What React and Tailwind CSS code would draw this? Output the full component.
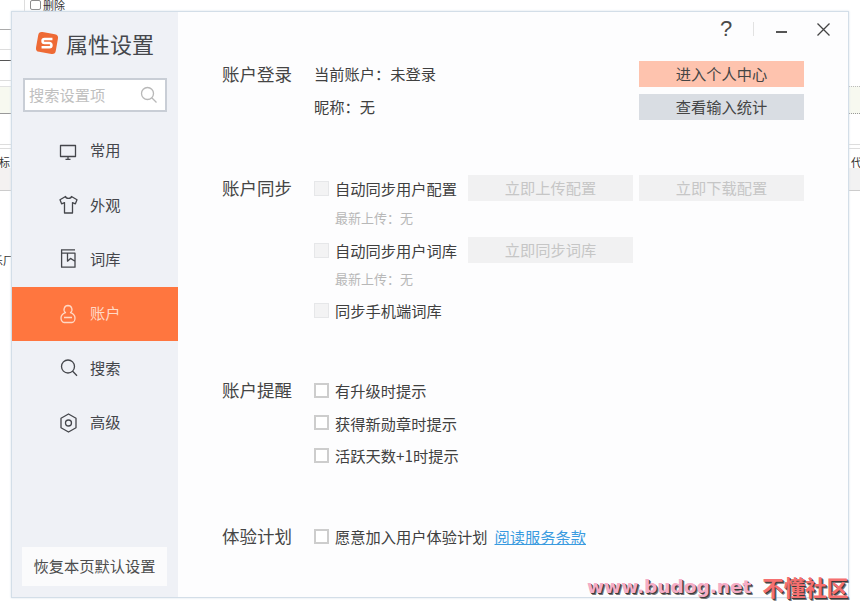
import React from 'react';

const navItems = [
  { label: '常用', icon: 'monitor' },
  { label: '外观', icon: 'shirt' },
  { label: '词库', icon: 'book' },
  { label: '账户', icon: 'user', active: true },
  { label: '搜索', icon: 'search' },
  { label: '高级', icon: 'gear' },
];

const NavIcon = ({ name }) => (
  <svg width="20" height="20" viewBox="0 0 20 20" fill="none" stroke="currentColor" strokeWidth="1.3" strokeLinejoin="round">
    {name === 'monitor' && <path d="M1.500 4.500h15v11h-15zM6.500 18.300h5M9 15.500v2.800" />}
    {name === 'shirt' && <path d="M6.500 1.500 1 4.800l1.600 4 2.900-1.200V18h8V7.600l2.900 1.200 1.600-4L12.500 1.500c-.5 2.500-5.500 2.500-6 0z" />}
    {name === 'book' && <path d="M2 .8h14M2.600.8V18.200H16V4.200H2.600M8.500 4.200v8l3-2.800 4.500 2.800" />}
    {name === 'user' && <path d="M9 1.500a4 4 0 0 1 2.500 7.100c2.800 1 4.500 3 4.500 5.400 0 2.500-1.500 4.500-3 4.500H5c-1.500 0-3-2-3-4.500 0-2.400 1.700-4.400 4.500-5.400A4 4 0 0 1 9 1.500zM5 13.500h8" />}
    {name === 'search' && <path d="M9 2a6.500 6.500 0 1 0 0 13 6.500 6.500 0 0 0 0-13zM13.700 13.200 18 17.800" />}
    {name === 'gear' && (
      <>
        <path d="M9.500 1 17 5.300v9.400L9.500 19 2 14.700V5.300z" />
        <circle cx="9.500" cy="10" r="3" />
      </>
    )}
  </svg>
);

const Checkbox = ({ disabled }) => (
  <span className={`block w-[15px] h-[15px] shrink-0 ${disabled ? 'border border-[#e6e7e9] bg-[#f3f3f4]' : 'border-2 border-[#cdcdcd] bg-white'}`} />
);

const CheckRow = ({ label, disabled, children, className = '' }) => (
  <div className={`flex items-center ${className}`}>
    <Checkbox disabled={disabled} />
    <span className="ml-[6px] text-[15.250px] leading-[26px] text-[#404040] whitespace-nowrap">{label}</span>
    {children}
  </div>
);

const GreyButton = ({ children }) => (
  <button type="button" className="w-[165px] h-[26px] shrink-0 pb-[2px] bg-[#f1f1f2] text-[15.250px] text-[#c6c6c6]">
    {children}
  </button>
);

const SectionLabel = ({ children }) => (
  <div className="w-[92px] shrink-0 text-[17.500px] leading-[26px] text-[#454545] whitespace-nowrap">{children}</div>
);

export default function App() {
  return (
    <div className="relative w-[860px] h-[609px] overflow-hidden bg-white [font-family:'Noto_Sans_CJK_SC','Noto_Sans',sans-serif]">
      {/* the page behind the dialog */}
      <div className="absolute left-[22px] top-0 w-[3px] h-[11px] border-r border-[#ddd]" />
      <div className="absolute left-[30px] top-0 w-[11px] h-[10px] border border-[#8c8c8c] rounded-[2px]" />
      <span className="absolute left-[43px] top-[-2px] text-[11px] leading-[14px] text-[#333]">删除</span>
      <div className="absolute left-0 top-[29px] w-[12px] h-px bg-[#aaa]" />
      <div className="absolute left-0 top-[49px] w-[12px] h-px bg-[#ddd]" />
      <div className="absolute left-0 top-[60px] w-[12px] h-px bg-[#555]" />
      <div className="absolute left-0 top-[80px] w-[12px] h-px bg-[#ddd]" />
      <div className="absolute left-0 top-[86px] w-[12px] h-[28px] bg-[#f7f9f0] border-t border-[#e2e2e2] border-b border-b-[#999]" />
      <div className="absolute left-0 top-[144px] w-[12px] h-px bg-[#ddd]" />
      <div className="absolute left-0 top-[148px] w-[12px] h-px bg-[#ddd]" />
      <div className="absolute left-0 top-[168px] w-[12px] h-[23px] bg-[#f4f1f1] border-b border-[#ccc]" />
      <span className="absolute left-[-1px] top-[155px] text-[11px] leading-[14px] text-[#333]">标</span>
      <span className="absolute left-[-8px] top-[253px] text-[11px] leading-[14px] text-[#333]">乐厂</span>
      <div className="absolute left-[849px] top-[86px] w-[11px] h-[28px] bg-[#f7f9f0] border-t border-dotted border-[#bbb] border-b border-b-[#999] border-b-solid" />
      <div className="absolute left-[849px] top-[144px] w-[11px] h-px bg-[#ddd]" />
      <div className="absolute left-[849px] top-[148px] w-[11px] h-px bg-[#ddd]" />
      <div className="absolute left-[849px] top-[168px] w-[11px] h-[23px] bg-[#f2f2f2] border-b border-[#ccc]" />
      <span className="absolute left-[851px] top-[155px] text-[11px] leading-[14px] text-[#333]">代</span>

      {/* dialog */}
      <div className="absolute left-[11px] top-[11px] w-[838px] h-[587px] flex bg-[#fdfdfe] border border-[#d3dee8] shadow-[0_0_2px_#d5e0ea]">
        <aside className="w-[166px] shrink-0 flex flex-col bg-[#eff1f6]">
          <div className="flex items-center h-[24px] mt-[19px] ml-[23px]">
            <svg width="24" height="24" viewBox="0 0 22 22">
              <rect x="1.800" y="1.800" width="18.400" height="18.400" rx="3.500" transform="rotate(10 11 11)" fill="#ee6a35" />
              <path d="M16 7.300H8.800a1.900 1.900 0 0 0 0 3.800h4.400a1.900 1.900 0 0 1 0 3.800H6" fill="none" stroke="#fff" strokeWidth="2.300" />
            </svg>
            <span className="ml-[7px] text-[22px] leading-[24px] text-[#45474c] whitespace-nowrap">属性设置</span>
          </div>
          <div className="flex items-center justify-between w-[144px] h-[34px] mt-[23px] ml-[11px] pl-[4px] pr-[7px] bg-white border-2 border-[#c9ced6]">
            <span className="pb-[2px] text-[15.250px] text-[#c0c0c0] whitespace-nowrap">搜索设置项</span>
            <svg width="18" height="18" viewBox="0 0 18 18" fill="none" stroke="#b8b8b8" strokeWidth="1.300">
              <path d="M7.500 1.500a6 6 0 1 0 0 12 6 6 0 0 0 0-12zM12 12l4.500 4.500" />
            </svg>
          </div>
          <nav className="flex flex-col mt-[11.500px]">
            {navItems.map((item) => (
              <div
                key={item.label}
                className={`flex items-center h-[54.400px] pl-[47px] ${item.active ? 'bg-[#ff763f] text-[#ffd9c6]' : 'text-[#44464b]'}`}
              >
                <NavIcon name={item.icon} />
                <span className="ml-[11px] pb-[2px] text-[15.250px]">{item.label}</span>
              </div>
            ))}
          </nav>
          <button type="button" className="mt-auto mb-[11px] ml-[10px] w-[145px] h-[39px] pb-[2px] bg-[#fbfbfc] text-[15.250px] text-[#4d4d4d] whitespace-nowrap">
            恢复本页默认设置
          </button>
        </aside>

        <main className="relative flex-1 flex flex-col pl-[44px]">
          <div className="absolute left-[542px] top-[3px] flex items-center text-[#4a4a4a]">
            <span className="text-[22px] leading-[28px] [font-family:'Liberation_Sans',sans-serif]">?</span>
            <span className="w-px h-[14px] ml-[21px] bg-[#e2e2e2]" />
            <span className="w-[11px] h-[2px] mt-[6px] ml-[22px] bg-[#555]" />
            <svg className="ml-[30px]" width="13" height="13" viewBox="0 0 13 13" fill="none" stroke="#444" strokeWidth="1.300">
              <path d="M.5.500l12 12M12.500.500l-12 12" />
            </svg>
          </div>

          <section className="flex mt-[49px]">
            <SectionLabel>账户登录</SectionLabel>
            <div className="flex-1 flex flex-col">
              <div className="flex justify-between h-[26px] mb-[7px] pr-[44px] items-center">
                <span className="pb-[2px] text-[15.250px] text-[#404040]">当前账户：未登录</span>
                <button type="button" className="w-[165px] h-[26px] pb-[2px] bg-[#fec3ae] text-[15.250px] text-[#454545]">进入个人中心</button>
              </div>
              <div className="flex justify-between h-[26px] pr-[44px] items-center">
                <span className="pb-[2px] text-[15.250px] text-[#404040]">昵称：无</span>
                <button type="button" className="w-[165px] h-[26px] pb-[2px] bg-[#d9dde3] text-[15.250px] text-[#454545]">查看输入统计</button>
              </div>
            </div>
          </section>

          <section className="flex mt-[55px]">
            <SectionLabel>账户同步</SectionLabel>
            <div className="flex-1 flex flex-col">
              <CheckRow label="自动同步用户配置" disabled>
                <div className="flex gap-[6px] ml-[11px]">
                  <GreyButton>立即上传配置</GreyButton>
                  <GreyButton>立即下载配置</GreyButton>
                </div>
              </CheckRow>
              <div className="ml-[21px] mt-[4px] h-[26px] text-[13px] leading-[26px] text-[#b8b8b8]">最新上传：无</div>
              <CheckRow label="自动同步用户词库" disabled className="mt-[6px]">
                <div className="ml-[11px]">
                  <GreyButton>立即同步词库</GreyButton>
                </div>
              </CheckRow>
              <div className="ml-[21px] mt-[3px] h-[26px] text-[13px] leading-[26px] text-[#b8b8b8]">最新上传：无</div>
              <CheckRow label="同步手机端词库" disabled className="mt-[5px]" />
            </div>
          </section>

          <section className="flex mt-[54px]">
            <SectionLabel>账户提醒</SectionLabel>
            <div className="flex-1 flex flex-col gap-[6.500px]">
              <CheckRow label="有升级时提示" />
              <CheckRow label="获得新勋章时提示" />
              <CheckRow label="活跃天数+1时提示" />
            </div>
          </section>

          <section className="flex mt-[55px]">
            <SectionLabel>体验计划</SectionLabel>
            <CheckRow label="愿意加入用户体验计划">
              <a className="ml-[7px] text-[15.250px] text-[#3a9be0] underline">阅读服务条款</a>
            </CheckRow>
          </section>
        </main>
      </div>

      {/* watermark */}
      <div className="absolute left-[587px] top-[573px] flex items-center font-bold whitespace-nowrap [font-family:'DejaVu_Sans',sans-serif]">
        <span className="text-[18.500px] leading-[28px] text-[#f5adc6] [text-shadow:1px_1px_0_#3a3a3a,2px_2px_0_#777]">www.budog.net</span>
        <span className="ml-[11px] text-[21.500px] leading-[28px] text-[#f57070] [text-shadow:1px_1px_0_#3a3a3a,2px_2px_0_#777] [font-family:'Noto_Sans_CJK_SC',sans-serif]">不懂社区</span>
      </div>
    </div>
  );
}
